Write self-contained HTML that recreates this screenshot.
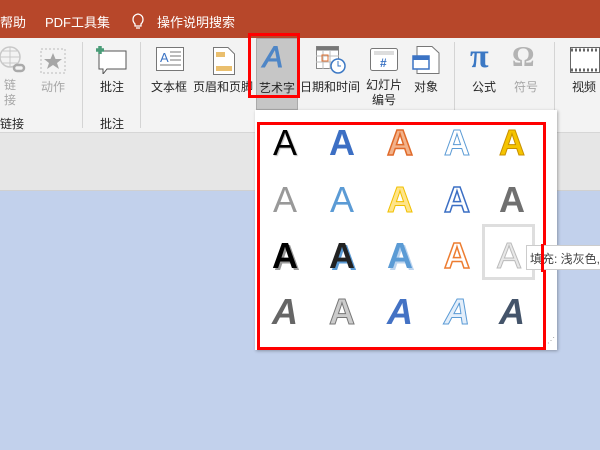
<!DOCTYPE html>
<html><head><meta charset="utf-8"><style>
*{margin:0;padding:0;box-sizing:border-box}
body{width:600px;height:450px;overflow:hidden;position:relative;background:#c2d1ec;font-family:"Liberation Sans","Noto Sans CJK SC",sans-serif;font-size:12px;color:#262626}
.abs{position:absolute}
.title{left:0;top:0;width:600px;height:38px;background:#b7472a;color:#fff;font-size:13px}
.ribbon{left:0;top:38px;width:600px;height:95px;background:#f3f3f3;border-bottom:1px solid #d6d6d6}
.band{left:0;top:133px;width:600px;height:58px;background:#e6e6e6;border-bottom:1px solid #d0d0d0}
.sep{width:1px;background:#d4d4d4}
.lbl{font-size:12px;white-space:nowrap;text-align:center}
.g{color:#a6a6a6}
.panel{left:255px;top:110px;width:302px;height:240px;background:#fff;box-shadow:1px 1px 3px rgba(0,0,0,.3)}
.L{position:absolute;width:50px;text-align:center;font:bold 36px "Liberation Sans",sans-serif;line-height:40px}
</style></head><body>
<div class="abs title">
 <span class="abs" style="left:0;top:12px">帮助</span>
 <span class="abs" style="left:45px;top:12px">PDF工具集</span>
 <svg class="abs" style="left:131px;top:12px" width="14" height="18" viewBox="0 0 14 18"><path d="M4 12 C1 9 1 3 7 2 C13 3 13 9 10 12 L10 14 L4 14 Z M5 16 H9" fill="none" stroke="#fff" stroke-width="1.3"/></svg>
 <span class="abs" style="left:157px;top:12px">操作说明搜索</span>
</div>
<div class="abs ribbon"></div>
<div class="abs band"></div>
<div class="abs sep" style="left:82px;top:42px;height:86px"></div>
<div class="abs sep" style="left:140px;top:42px;height:86px"></div>
<div class="abs sep" style="left:454px;top:42px;height:68px"></div>
<div class="abs sep" style="left:554px;top:42px;height:68px"></div>
<svg class="abs" style="left:0;top:45px" width="30" height="32"><circle cx="10" cy="12" r="10" fill="none" stroke="#c8c8c8" stroke-width="1.5"/><path d="M0 12H20M10 2V22M3 6H17M3 18H17" stroke="#c8c8c8"/><rect x="14" y="20" width="10" height="6" rx="3" fill="none" stroke="#aaa" stroke-width="2.5"/></svg>
<div class="abs lbl g" style="left:4px;top:78px;line-height:15px">链<br>接</div>
<svg class="abs" style="left:40px;top:48px" width="26" height="26"><rect x="1" y="1" width="24" height="24" fill="none" stroke="#bbb" stroke-dasharray="2 2"/><path d="M13 5 L15.5 11 L22 11 L17 15 L19 21 L13 17 L7 21 L9 15 L4 11 L10.5 11Z" fill="#a6a6a6"/></svg>
<div class="abs lbl g" style="left:41px;top:78px">动作</div>
<div class="abs lbl" style="left:0;top:115px">链接</div>
<svg class="abs" style="left:95px;top:44px" width="34" height="30"><path d="M4 7 H31 V25 H12 L8 30 V25 H4 Z" fill="#fff" stroke="#555"/><path d="M3 2V10M-1 6H7" stroke="#4a9c78" stroke-width="3.5" transform="translate(2,0)"/></svg>
<div class="abs lbl" style="left:100px;top:78px">批注</div>
<div class="abs lbl" style="left:100px;top:115px">批注</div>
<svg class="abs" style="left:156px;top:47px" width="28" height="24"><rect x="0.5" y="0.5" width="27" height="23" fill="#fff" stroke="#777"/><text x="4" y="15" font-size="13" fill="#3b73c4" font-family="Liberation Sans">A</text><path d="M14 5H25M14 9H25M14 13H25M4 18H25" stroke="#777"/></svg>
<div class="abs lbl" style="left:151px;top:78px">文本框</div>
<div class="abs lbl" style="left:166px;top:90px;font-size:9px">ˇ</div>
<svg class="abs" style="left:213px;top:47px" width="22" height="28"><path d="M.5 .5H15L21.5 7V27.5H.5Z" fill="#fff" stroke="#777"/><rect x="3" y="5" width="9" height="5" fill="#eabf6e"/><rect x="3" y="19" width="16" height="5" fill="#eabf6e"/></svg>
<div class="abs lbl" style="left:193px;top:78px">页眉和页脚</div>
<div class="abs" style="left:256px;top:38px;width:42px;height:72px;background:#c6c6c6;border:1px solid #aaa"></div>
<div class="abs" style="left:248px;top:33px;width:52px;height:65px;border:3px solid #f00"></div>
<div class="abs" style="left:263px;top:41px;font:italic 30px 'Liberation Sans',sans-serif;color:#4f86c6;-webkit-text-stroke:1px #4f86c6">A</div>
<div class="abs lbl" style="left:259px;top:79px">艺术字</div>
<svg class="abs" style="left:316px;top:46px" width="30" height="28"><rect x=".5" y=".5" width="22" height="22" fill="#fff" stroke="#888"/><rect x=".5" y=".5" width="22" height="4" fill="#777"/><path d="M0 10H23M0 16H23M7 5V23M14 5V23" stroke="#bbb"/><rect x="6" y="9" width="6" height="6" fill="none" stroke="#e07030"/><circle cx="22" cy="20" r="7" fill="#fff" stroke="#3b78c4" stroke-width="1.5"/><path d="M22 15V20H25" stroke="#3b78c4" fill="none"/></svg>
<div class="abs lbl" style="left:300px;top:78px">日期和时间</div>
<svg class="abs" style="left:370px;top:48px" width="28" height="24"><rect x=".5" y=".5" width="27" height="22" rx="2" fill="#fff" stroke="#777"/><path d="M4 4H24M4 6H24" stroke="#bbb"/><text x="10" y="19" font-size="12" fill="#3b73c4" font-weight="bold" font-family="Liberation Sans">#</text></svg>
<div class="abs lbl" style="left:366px;top:78px;line-height:15px">幻灯片<br>编号</div>
<svg class="abs" style="left:412px;top:46px" width="28" height="28"><path d="M5 .5H20L27 7V27.5H5Z" fill="#fff" stroke="#777"/><rect x="1" y="10" width="16" height="13" fill="#fff" stroke="#3b73c4" stroke-width="1.5"/><rect x="1" y="10" width="16" height="4" fill="#3b73c4"/></svg>
<div class="abs lbl" style="left:414px;top:78px">对象</div>
<div class="abs" style="left:470px;top:38px;font:bold 34px 'Liberation Serif',serif;color:#3b78c4">π</div>
<div class="abs lbl" style="left:472px;top:78px">公式</div>
<div class="abs lbl" style="left:480px;top:90px;font-size:9px">ˇ</div>
<div class="abs" style="left:512px;top:42px;font:bold 28px 'Liberation Serif',serif;color:#b3b3b3">Ω</div>
<div class="abs lbl g" style="left:514px;top:78px">符号</div>
<svg class="abs" style="left:570px;top:47px" width="30" height="26"><rect x=".5" y=".5" width="29" height="25" fill="#fff" stroke="#666"/><path d="M1 3H30M1 23H30" stroke="#666" stroke-width="3" stroke-dasharray="2 2"/></svg>
<div class="abs lbl" style="left:572px;top:78px">视频</div>
<div class="abs lbl" style="left:582px;top:90px;font-size:9px">ˇ</div>
<div class="abs panel"></div>
<div class="abs" style="left:482px;top:224px;width:53px;height:56px;border:3px solid #dedede"></div>
<div class="abs" style="left:257px;top:122px;width:289px;height:228px;border:3px solid #f00"></div>
<div class="abs" style="left:547px;top:336px;color:#999;font-size:8px">⋰</div>
<div class="L" style="left:260px;top:123px;color:#000;text-shadow:1px 1px 1px #bbb;font-weight:normal">A</div>
<div class="L" style="left:317px;top:123px;color:#3c6fc4">A</div>
<div class="L" style="left:375px;top:123px;color:#f2b28a;-webkit-text-stroke:1.5px #e06a2a">A</div>
<div class="L" style="left:432px;top:123px;color:#fff;-webkit-text-stroke:1px #5b9bd5">A</div>
<div class="L" style="left:487px;top:123px;color:#f5c400;-webkit-text-stroke:1px #c89000">A</div>
<div class="L" style="left:260px;top:180px;color:#999;font-weight:normal">A</div>
<div class="L" style="left:317px;top:180px;color:#5b9bd5;font-weight:normal">A</div>
<div class="L" style="left:375px;top:180px;color:#ffe48a;-webkit-text-stroke:1px #f0c000">A</div>
<div class="L" style="left:432px;top:180px;color:#fff;-webkit-text-stroke:1.5px #3c6fc4">A</div>
<div class="L" style="left:487px;top:180px;color:#707070">A</div>
<div class="L" style="left:260px;top:236px;color:#000;text-shadow:2px 2px 0 #999">A</div>
<div class="L" style="left:317px;top:236px;color:#222;text-shadow:2px 2px 0 #5b9bd5">A</div>
<div class="L" style="left:375px;top:236px;color:#5b9bd5;text-shadow:2px 2px 0 #bcd4ee">A</div>
<div class="L" style="left:432px;top:236px;color:#fff;-webkit-text-stroke:1.5px #ed7d31">A</div>
<div class="L" style="left:484px;top:236px;color:#e8e8e8;-webkit-text-stroke:1px #bbb;font-weight:normal">A</div>
<div class="L" style="left:260px;top:292px;color:#666;font-style:italic">A</div>
<div class="L" style="left:317px;top:292px;color:#ccc;-webkit-text-stroke:1px #777">A</div>
<div class="L" style="left:375px;top:292px;color:#4472c4;font-style:italic">A</div>
<div class="L" style="left:432px;top:292px;color:#e3eefa;-webkit-text-stroke:1px #5b9bd5;font-style:italic">A</div>
<div class="L" style="left:487px;top:292px;color:#44546a;font-style:italic">A</div>
<div class="abs" style="left:526px;top:245px;width:80px;height:25px;background:#fff;border:1px solid #ccc;font-size:12px;padding:4px 0 0 3px;color:#444;white-space:nowrap">填充: 浅灰色,</div>
<div class="abs" style="left:541px;top:244px;width:3px;height:28px;background:#f00"></div>
</body></html>
